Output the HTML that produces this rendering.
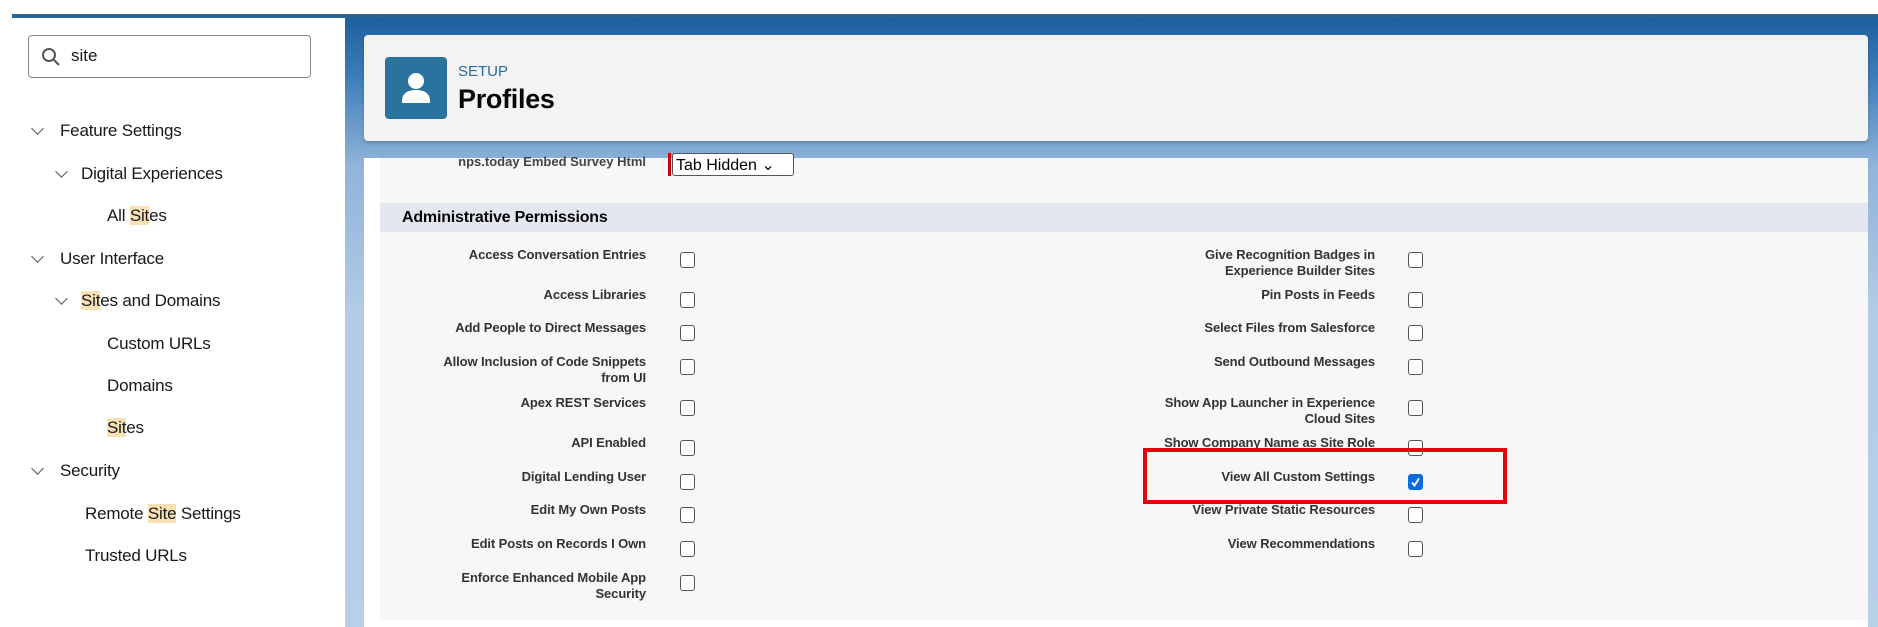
<!DOCTYPE html>
<html><head><style>
*{margin:0;padding:0;box-sizing:border-box}
body{width:1878px;height:627px;position:relative;overflow:hidden;background:#fff;font-family:"Liberation Sans",Arial,sans-serif}
.bg{position:absolute;left:345px;top:14px;width:1533px;height:613px;background:linear-gradient(180deg,#1d5f9c 0px,#3a7bb8 60px,#8fb3d9 150px,#b3cbe6 300px,#b8cfe8 613px)}
.topline{position:absolute;left:12px;top:14px;width:1866px;height:4px;background:#2a6493}
.side{position:absolute;left:0;top:18px;width:345px;height:609px;background:#fff}
.search{position:absolute;left:28px;top:35px;width:283px;height:43px;border:1px solid #8a8a8a;border-radius:4px;font-size:17px;color:#181818;padding:10px 0 0 42px}
.nav{position:absolute;font-size:17px;color:#181818;white-space:nowrap;letter-spacing:-0.2px}
.chev{position:absolute;width:9px;height:9px;border-right:1.5px solid #555;border-bottom:1.5px solid #555;transform:rotate(45deg)}
mark{background:#f8e1b5;color:inherit}
.card{position:absolute;left:364px;top:35px;width:1504px;height:106px;background:#f3f3f3;border-radius:4px;box-shadow:0 2px 3px rgba(0,0,0,.2)}
.icon{position:absolute;left:21px;top:22px;width:62px;height:62px;background:#2a739f;border-radius:4px}
.panel{position:absolute;left:364px;top:158px;width:1504px;height:469px;background:#fff}
.inner{position:absolute;left:16px;top:0;width:1488px;height:462px;background:#f7f7f7}
.hdr{position:absolute;left:0;top:45px;width:1488px;height:29px;background:#e4e7ef;font-weight:bold;font-size:16px;color:#080707;padding:6px 0 0 22px;letter-spacing:-0.2px}
.lbl{position:absolute;font-size:13px;font-weight:bold;color:#333;text-align:right;line-height:16px;width:280px;letter-spacing:-0.1px}
.cb{position:absolute;width:15px;height:16px;border:1.3px solid #555;border-radius:3px;background:#fff}
</style></head><body>
<div class="bg"></div>
<div class="topline"></div>
<div class="side">
</div>
<div class="search"><svg style="position:absolute;left:12px;top:11px" width="20" height="20" viewBox="0 0 20 20"><circle cx="8" cy="8" r="6" fill="none" stroke="#555" stroke-width="2"/><path d="M12.5 12.5L18 18" stroke="#555" stroke-width="2.2"/></svg>site</div>

<div class="chev" style="left:33px;top:124px"></div><div class="nav" style="left:60px;top:121px">Feature Settings</div>
<div class="chev" style="left:57px;top:167px"></div><div class="nav" style="left:81px;top:164px">Digital Experiences</div>
<div class="nav" style="left:107px;top:206px">All <mark>Sit</mark>es</div>
<div class="chev" style="left:33px;top:252px"></div><div class="nav" style="left:60px;top:249px">User Interface</div>
<div class="chev" style="left:57px;top:294px"></div><div class="nav" style="left:81px;top:291px"><mark>Sit</mark>es and Domains</div>
<div class="nav" style="left:107px;top:334px">Custom URLs</div>
<div class="nav" style="left:107px;top:376px">Domains</div>
<div class="nav" style="left:107px;top:418px"><mark>Sit</mark>es</div>
<div class="chev" style="left:33px;top:464px"></div><div class="nav" style="left:60px;top:461px">Security</div>
<div class="nav" style="left:85px;top:504px">Remote <mark>Site</mark> Settings</div>
<div class="nav" style="left:85px;top:546px">Trusted URLs</div>

<div class="card">
<div class="icon"><svg width="62" height="62" viewBox="0 0 62 62"><circle cx="31" cy="24" r="8" fill="#fff"/><path d="M17 44c0-8 6-11 14-11s14 3 14 11v2H17z" fill="#fff"/></svg></div>
<div style="position:absolute;left:94px;top:28px;font-size:15px;color:#2a6aa0">SETUP</div>
<div style="position:absolute;left:94px;top:49px;font-size:27px;font-weight:bold;color:#080707;letter-spacing:-0.3px">Profiles</div>
</div>

<div class="panel"><div class="inner">
<div style="position:absolute;left:0;top:-4px;width:266px;text-align:right;font-size:13px;font-weight:bold;color:#444">nps.today Embed Survey Html</div>
<div style="position:absolute;left:288px;top:-5px;width:3px;height:23px;background:#c00"></div>
<div style="position:absolute;left:292px;top:-5px;width:122px;height:23px;border:1px solid #555;border-radius:3px;background:#fff;font-size:16px;padding:1px 0 0 3px;color:#000">Tab Hidden ⌄</div>
<div class="hdr">Administrative Permissions</div>
</div></div>

<!-- left column -->
<div class="lbl" style="left:366px;top:247px">Access Conversation Entries</div><div class="cb" style="left:680px;top:252px"></div>
<div class="lbl" style="left:366px;top:287px">Access Libraries</div><div class="cb" style="left:680px;top:292px"></div>
<div class="lbl" style="left:366px;top:320px">Add People to Direct Messages</div><div class="cb" style="left:680px;top:325px"></div>
<div class="lbl" style="left:366px;top:354px">Allow Inclusion of Code Snippets<br>from UI</div><div class="cb" style="left:680px;top:359px"></div>
<div class="lbl" style="left:366px;top:395px">Apex REST Services</div><div class="cb" style="left:680px;top:400px"></div>
<div class="lbl" style="left:366px;top:435px">API Enabled</div><div class="cb" style="left:680px;top:440px"></div>
<div class="lbl" style="left:366px;top:469px">Digital Lending User</div><div class="cb" style="left:680px;top:474px"></div>
<div class="lbl" style="left:366px;top:502px">Edit My Own Posts</div><div class="cb" style="left:680px;top:507px"></div>
<div class="lbl" style="left:366px;top:536px">Edit Posts on Records I Own</div><div class="cb" style="left:680px;top:541px"></div>
<div class="lbl" style="left:366px;top:570px">Enforce Enhanced Mobile App<br>Security</div><div class="cb" style="left:680px;top:575px"></div>

<!-- right column -->
<div class="lbl" style="left:1095px;top:247px">Give Recognition Badges in<br>Experience Builder Sites</div><div class="cb" style="left:1408px;top:252px"></div>
<div class="lbl" style="left:1095px;top:287px">Pin Posts in Feeds</div><div class="cb" style="left:1408px;top:292px"></div>
<div class="lbl" style="left:1095px;top:320px">Select Files from Salesforce</div><div class="cb" style="left:1408px;top:325px"></div>
<div class="lbl" style="left:1095px;top:354px">Send Outbound Messages</div><div class="cb" style="left:1408px;top:359px"></div>
<div class="lbl" style="left:1095px;top:395px">Show App Launcher in Experience<br>Cloud Sites</div><div class="cb" style="left:1408px;top:400px"></div>
<div class="lbl" style="left:1095px;top:435px">Show Company Name as Site Role</div><div class="cb" style="left:1408px;top:440px"></div>
<div class="lbl" style="left:1095px;top:469px">View All Custom Settings</div>
<div class="cb" style="left:1408px;top:474px;background:#0b6bd8;border-color:#0b6bd8"><svg width="13" height="14" viewBox="0 0 13 14" style="position:absolute;left:0;top:0"><path d="M3 7.5l2.5 3L10 3.5" fill="none" stroke="#fff" stroke-width="2"/></svg></div>
<div class="lbl" style="left:1095px;top:502px">View Private Static Resources</div><div class="cb" style="left:1408px;top:507px"></div>
<div class="lbl" style="left:1095px;top:536px">View Recommendations</div><div class="cb" style="left:1408px;top:541px"></div>

<div style="position:absolute;left:1143px;top:448px;width:364px;height:56px;border:4px solid #e8000b"></div>
</body></html>
